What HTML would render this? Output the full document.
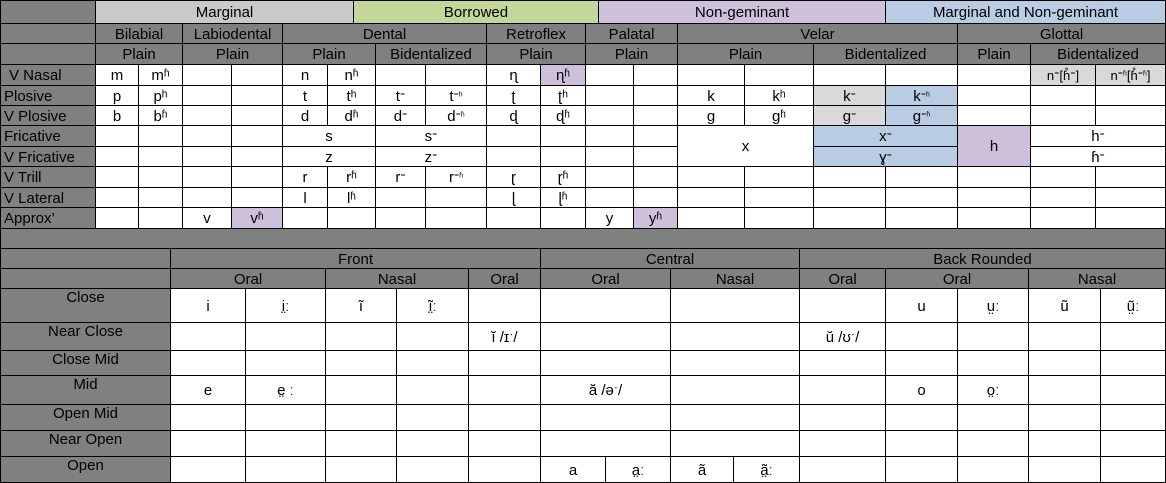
<!DOCTYPE html>
<html><head><meta charset="utf-8"><style>
body{margin:0;width:1166px;height:483px;position:relative;overflow:hidden;background:#fff;font-family:"Liberation Sans",Arial,"DejaVu Sans",sans-serif;font-size:15px;color:#000}
.b{position:absolute;box-sizing:border-box;border:1px solid #000;display:flex;align-items:center;justify-content:center;white-space:nowrap;overflow:hidden;padding-top:1px;background:#fff}
.g{background:#808080}
.rl{justify-content:flex-start;padding-left:3px}
.vl{align-items:flex-start;padding-top:0}
.p{background:#ccc0da}.lg{background:#d9d9d9}.bl{background:#b8cce4}
.s{font-size:13px}
.l{position:absolute;background:#000}
i{font-style:normal;font-size:10px;vertical-align:6px}
</style></head><body>
<div class="l" style="left:0;top:64px;width:1166px;height:1px"></div>
<div class="l" style="left:0;top:85px;width:1166px;height:1px"></div>
<div class="l" style="left:0;top:105px;width:1166px;height:1px"></div>
<div class="l" style="left:0;top:125px;width:1166px;height:1px"></div>
<div class="l" style="left:0;top:146px;width:1166px;height:1px"></div>
<div class="l" style="left:0;top:166px;width:1166px;height:1px"></div>
<div class="l" style="left:0;top:187px;width:1166px;height:1px"></div>
<div class="l" style="left:0;top:207px;width:1166px;height:1px"></div>
<div class="l" style="left:0;top:228px;width:1166px;height:1px"></div>
<div class="l" style="left:95px;top:64px;width:1px;height:165px"></div>
<div class="l" style="left:138px;top:64px;width:1px;height:165px"></div>
<div class="l" style="left:182px;top:64px;width:1px;height:165px"></div>
<div class="l" style="left:231px;top:64px;width:1px;height:165px"></div>
<div class="l" style="left:282px;top:64px;width:1px;height:165px"></div>
<div class="l" style="left:327px;top:64px;width:1px;height:165px"></div>
<div class="l" style="left:375px;top:64px;width:1px;height:165px"></div>
<div class="l" style="left:425px;top:64px;width:1px;height:165px"></div>
<div class="l" style="left:486px;top:64px;width:1px;height:165px"></div>
<div class="l" style="left:540px;top:64px;width:1px;height:165px"></div>
<div class="l" style="left:585px;top:64px;width:1px;height:165px"></div>
<div class="l" style="left:633px;top:64px;width:1px;height:165px"></div>
<div class="l" style="left:677px;top:64px;width:1px;height:165px"></div>
<div class="l" style="left:744px;top:64px;width:1px;height:165px"></div>
<div class="l" style="left:813px;top:64px;width:1px;height:165px"></div>
<div class="l" style="left:885px;top:64px;width:1px;height:165px"></div>
<div class="l" style="left:957px;top:64px;width:1px;height:165px"></div>
<div class="l" style="left:1030px;top:64px;width:1px;height:165px"></div>
<div class="l" style="left:1095px;top:64px;width:1px;height:165px"></div>
<div class="l" style="left:1165px;top:0;width:1px;height:483px"></div>

<div class="b g" style="left:0;top:0;width:96px;height:24px"></div>
<div class="b" style="left:95px;top:0;width:259px;height:24px;background:#c9c9c9">Marginal</div>
<div class="b" style="left:353px;top:0;width:246px;height:24px;background:#c4d79b">Borrowed</div>
<div class="b" style="left:598px;top:0;width:288px;height:24px;background:#ccc0da">Non-geminant</div>
<div class="b" style="left:885px;top:0;width:281px;height:24px;background:#b8cce4">Marginal and Non-geminant</div>

<div class="b g" style="left:0;top:23px;width:96px;height:21px"></div>
<div class="b g" style="left:95px;top:23px;width:88px;height:21px">Bilabial</div>
<div class="b g" style="left:182px;top:23px;width:101px;height:21px">Labiodental</div>
<div class="b g" style="left:282px;top:23px;width:205px;height:21px">Dental</div>
<div class="b g" style="left:486px;top:23px;width:100px;height:21px">Retroflex</div>
<div class="b g" style="left:585px;top:23px;width:93px;height:21px">Palatal</div>
<div class="b g" style="left:677px;top:23px;width:281px;height:21px">Velar</div>
<div class="b g" style="left:957px;top:23px;width:209px;height:21px">Glottal</div>

<div class="b g" style="left:0;top:43px;width:96px;height:22px"></div>
<div class="b g" style="left:95px;top:43px;width:88px;height:22px">Plain</div>
<div class="b g" style="left:182px;top:43px;width:101px;height:22px">Plain</div>
<div class="b g" style="left:282px;top:43px;width:94px;height:22px">Plain</div>
<div class="b g" style="left:375px;top:43px;width:112px;height:22px">Bidentalized</div>
<div class="b g" style="left:486px;top:43px;width:100px;height:22px">Plain</div>
<div class="b g" style="left:585px;top:43px;width:93px;height:22px">Plain</div>
<div class="b g" style="left:677px;top:43px;width:137px;height:22px">Plain</div>
<div class="b g" style="left:813px;top:43px;width:145px;height:22px">Bidentalized</div>
<div class="b g" style="left:957px;top:43px;width:74px;height:22px">Plain</div>
<div class="b g" style="left:1030px;top:43px;width:136px;height:22px">Bidentalized</div>

<div class="b g rl" style="left:0;top:64px;width:96px;height:22px;padding-left:8px">V Nasal</div>
<div class="b g rl" style="left:0;top:85px;width:96px;height:21px">Plosive</div>
<div class="b g rl" style="left:0;top:105px;width:96px;height:21px">V Plosive</div>
<div class="b g rl" style="left:0;top:125px;width:96px;height:22px">Fricative</div>
<div class="b g rl" style="left:0;top:146px;width:96px;height:21px">V Fricative</div>
<div class="b g rl" style="left:0;top:166px;width:96px;height:22px">V Trill</div>
<div class="b g rl" style="left:0;top:187px;width:96px;height:21px">V Lateral</div>
<div class="b g rl" style="left:0;top:207px;width:96px;height:22px">Approx’</div>

<div class="b" style="left:95px;top:64px;width:44px;height:22px">m</div>
<div class="b" style="left:138px;top:64px;width:45px;height:22px">mʱ</div>
<div class="b" style="left:282px;top:64px;width:46px;height:22px">n</div>
<div class="b" style="left:327px;top:64px;width:49px;height:22px">nʱ</div>
<div class="b" style="left:486px;top:64px;width:55px;height:22px">ɳ</div>
<div class="b p" style="left:540px;top:64px;width:46px;height:22px">ɳʱ</div>
<div class="b lg s" style="left:1030px;top:64px;width:66px;height:22px">n<i>⁼</i> [ɦ̊<i>⁼</i>]</div>
<div class="b lg s" style="left:1095px;top:64px;width:71px;height:22px">n<i>⁼ʱ</i> [ɦ̊<i>⁼ʱ</i>]</div>

<div class="b" style="left:95px;top:85px;width:44px;height:21px">p</div>
<div class="b" style="left:138px;top:85px;width:45px;height:21px">pʰ</div>
<div class="b" style="left:282px;top:85px;width:46px;height:21px">t</div>
<div class="b" style="left:327px;top:85px;width:49px;height:21px">tʰ</div>
<div class="b" style="left:375px;top:85px;width:51px;height:21px">t<i>⁼</i></div>
<div class="b" style="left:425px;top:85px;width:62px;height:21px">t<i>⁼ʰ</i></div>
<div class="b" style="left:486px;top:85px;width:55px;height:21px">ʈ</div>
<div class="b" style="left:540px;top:85px;width:46px;height:21px">ʈʰ</div>
<div class="b" style="left:677px;top:85px;width:68px;height:21px">k</div>
<div class="b" style="left:744px;top:85px;width:70px;height:21px">kʰ</div>
<div class="b lg" style="left:813px;top:85px;width:73px;height:21px">k<i>⁼</i></div>
<div class="b bl" style="left:885px;top:85px;width:73px;height:21px">k<i>⁼ʰ</i></div>

<div class="b" style="left:95px;top:105px;width:44px;height:21px">b</div>
<div class="b" style="left:138px;top:105px;width:45px;height:21px">bʱ</div>
<div class="b" style="left:282px;top:105px;width:46px;height:21px">d</div>
<div class="b" style="left:327px;top:105px;width:49px;height:21px">dʱ</div>
<div class="b" style="left:375px;top:105px;width:51px;height:21px">d<i>⁼</i></div>
<div class="b" style="left:425px;top:105px;width:62px;height:21px">d<i>⁼ʱ</i></div>
<div class="b" style="left:486px;top:105px;width:55px;height:21px">ɖ</div>
<div class="b" style="left:540px;top:105px;width:46px;height:21px">ɖʱ</div>
<div class="b" style="left:677px;top:105px;width:68px;height:21px">g</div>
<div class="b" style="left:744px;top:105px;width:70px;height:21px">gʱ</div>
<div class="b lg" style="left:813px;top:105px;width:73px;height:21px">g<i>⁼</i></div>
<div class="b bl" style="left:885px;top:105px;width:73px;height:21px">g<i>⁼ʱ</i></div>

<div class="b" style="left:282px;top:125px;width:94px;height:22px">s</div>
<div class="b" style="left:375px;top:125px;width:112px;height:22px">s<i>⁼</i></div>
<div class="b" style="left:677px;top:125px;width:137px;height:42px">x</div>
<div class="b bl" style="left:813px;top:125px;width:145px;height:22px">x<i>⁼</i></div>
<div class="b p" style="left:957px;top:125px;width:74px;height:42px">h</div>
<div class="b" style="left:1030px;top:125px;width:136px;height:22px">h<i>⁼</i></div>
<div class="b" style="left:282px;top:146px;width:94px;height:21px">z</div>
<div class="b" style="left:375px;top:146px;width:112px;height:21px">z<i>⁼</i></div>
<div class="b bl" style="left:813px;top:146px;width:145px;height:21px">ɣ<i>⁼</i></div>
<div class="b" style="left:1030px;top:146px;width:136px;height:21px">ɦ<i>⁼</i></div>

<div class="b" style="left:282px;top:166px;width:46px;height:22px">r</div>
<div class="b" style="left:327px;top:166px;width:49px;height:22px">rʱ</div>
<div class="b" style="left:375px;top:166px;width:51px;height:22px">r<i>⁼</i></div>
<div class="b" style="left:425px;top:166px;width:62px;height:22px">r<i>⁼ʱ</i></div>
<div class="b" style="left:486px;top:166px;width:55px;height:22px">ɽ</div>
<div class="b" style="left:540px;top:166px;width:46px;height:22px">ɽʱ</div>

<div class="b" style="left:282px;top:187px;width:46px;height:21px">l</div>
<div class="b" style="left:327px;top:187px;width:49px;height:21px">lʱ</div>
<div class="b" style="left:486px;top:187px;width:55px;height:21px">ɭ</div>
<div class="b" style="left:540px;top:187px;width:46px;height:21px">ɭʱ</div>

<div class="b" style="left:182px;top:207px;width:50px;height:22px">v</div>
<div class="b p" style="left:231px;top:207px;width:52px;height:22px">vʱ</div>
<div class="b" style="left:585px;top:207px;width:49px;height:22px">y</div>
<div class="b p" style="left:633px;top:207px;width:45px;height:22px">yʱ</div>

<div class="b g" style="left:0;top:228px;width:1166px;height:21px"></div>

<div class="b g" style="left:0;top:248px;width:171px;height:21px"></div>
<div class="b g" style="left:170px;top:248px;width:371px;height:21px">Front</div>
<div class="b g" style="left:540px;top:248px;width:260px;height:21px">Central</div>
<div class="b g" style="left:799px;top:248px;width:367px;height:21px">Back Rounded</div>
<div class="b g" style="left:0;top:268px;width:171px;height:21px"></div>
<div class="b g" style="left:170px;top:268px;width:156px;height:21px">Oral</div>
<div class="b g" style="left:325px;top:268px;width:144px;height:21px">Nasal</div>
<div class="b g" style="left:468px;top:268px;width:73px;height:21px">Oral</div>
<div class="b g" style="left:540px;top:268px;width:131px;height:21px">Oral</div>
<div class="b g" style="left:670px;top:268px;width:130px;height:21px">Nasal</div>
<div class="b g" style="left:799px;top:268px;width:87px;height:21px">Oral</div>
<div class="b g" style="left:885px;top:268px;width:144px;height:21px">Oral</div>
<div class="b g" style="left:1028px;top:268px;width:138px;height:21px">Nasal</div>

<div class="l" style="left:0;top:322px;width:1166px;height:1px"></div>
<div class="l" style="left:0;top:350px;width:1166px;height:1px"></div>
<div class="l" style="left:0;top:375px;width:1166px;height:1px"></div>
<div class="l" style="left:0;top:404px;width:1166px;height:1px"></div>
<div class="l" style="left:0;top:430px;width:1166px;height:1px"></div>
<div class="l" style="left:0;top:456px;width:1166px;height:1px"></div>
<div class="l" style="left:0;top:482px;width:1166px;height:1px"></div>
<div class="l" style="left:245px;top:288px;width:1px;height:195px"></div>
<div class="l" style="left:325px;top:288px;width:1px;height:195px"></div>
<div class="l" style="left:396px;top:288px;width:1px;height:195px"></div>
<div class="l" style="left:468px;top:288px;width:1px;height:195px"></div>
<div class="l" style="left:540px;top:288px;width:1px;height:195px"></div>
<div class="l" style="left:670px;top:288px;width:1px;height:195px"></div>
<div class="l" style="left:799px;top:288px;width:1px;height:195px"></div>
<div class="l" style="left:885px;top:288px;width:1px;height:195px"></div>
<div class="l" style="left:957px;top:288px;width:1px;height:195px"></div>
<div class="l" style="left:1028px;top:288px;width:1px;height:195px"></div>
<div class="l" style="left:1100px;top:288px;width:1px;height:195px"></div>
<div class="l" style="left:605px;top:456px;width:1px;height:27px"></div>
<div class="l" style="left:733px;top:456px;width:1px;height:27px"></div>

<div class="b g vl" style="left:0;top:288px;width:171px;height:35px">Close</div>
<div class="b g vl" style="left:0;top:322px;width:171px;height:29px">Near Close</div>
<div class="b g vl" style="left:0;top:350px;width:171px;height:26px">Close Mid</div>
<div class="b g vl" style="left:0;top:375px;width:171px;height:30px">Mid</div>
<div class="b g vl" style="left:0;top:404px;width:171px;height:27px">Open Mid</div>
<div class="b g vl" style="left:0;top:430px;width:171px;height:27px">Near Open</div>
<div class="b g vl" style="left:0;top:456px;width:171px;height:27px">Open</div>

<div class="b" style="left:170px;top:288px;width:76px;height:35px">i</div>
<div class="b" style="left:245px;top:288px;width:81px;height:35px">i̤ː</div>
<div class="b" style="left:325px;top:288px;width:72px;height:35px">ĩ</div>
<div class="b" style="left:396px;top:288px;width:73px;height:35px">ĩ̤ː</div>
<div class="b" style="left:885px;top:288px;width:73px;height:35px">u</div>
<div class="b" style="left:957px;top:288px;width:72px;height:35px">ṳː</div>
<div class="b" style="left:1028px;top:288px;width:73px;height:35px">ũ</div>
<div class="b" style="left:1100px;top:288px;width:66px;height:35px">ṳ̃ː</div>
<div class="b" style="left:468px;top:322px;width:73px;height:29px">ĭ /ɪˑ/</div>
<div class="b" style="left:799px;top:322px;width:87px;height:29px">ŭ /ʊˑ/</div>
<div class="b" style="left:170px;top:375px;width:76px;height:30px">e</div>
<div class="b" style="left:245px;top:375px;width:81px;height:30px">e̤ ː</div>
<div class="b" style="left:540px;top:375px;width:131px;height:30px">ă /əˑ/</div>
<div class="b" style="left:885px;top:375px;width:73px;height:30px">o</div>
<div class="b" style="left:957px;top:375px;width:72px;height:30px">o̤ː</div>
<div class="b" style="left:540px;top:456px;width:66px;height:27px">a</div>
<div class="b" style="left:605px;top:456px;width:66px;height:27px">a̤ː</div>
<div class="b" style="left:670px;top:456px;width:64px;height:27px">ã</div>
<div class="b" style="left:733px;top:456px;width:67px;height:27px">ã̤ː</div>
</body></html>
